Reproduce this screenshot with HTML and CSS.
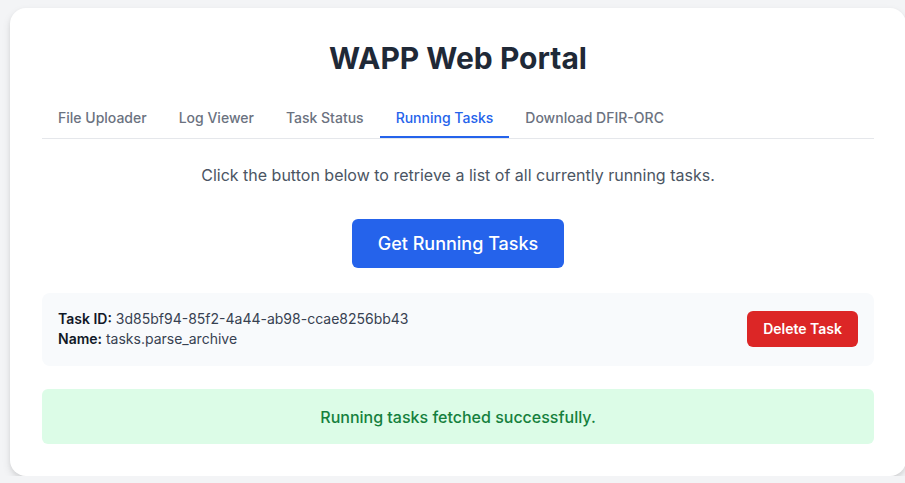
FILE: index.html
```html
<!DOCTYPE html>
<html lang="en">
<head>
<meta charset="utf-8">
<title>WAPP Web Portal</title>
<link rel="stylesheet" href="styles.css">
</head>
<body>
<main class="card">
  <h1 class="title">WAPP Web Portal</h1>
  <nav class="tabs">
    <button class="tab">File Uploader</button>
    <button class="tab">Log Viewer</button>
    <button class="tab">Task Status</button>
    <button class="tab active">Running Tasks</button>
    <button class="tab">Download DFIR-ORC</button>
  </nav>
  <section class="panel">
    <p class="desc">Click the button below to retrieve a list of all currently running tasks.</p>
    <div class="action">
      <button class="primary">Get Running Tasks</button>
    </div>
    <div class="task">
      <div class="task-info">
        <div><strong>Task ID:</strong> 3d85bf94-85f2-4a44-ab98-ccae8256bb43</div>
        <div><strong>Name:</strong> tasks.parse_archive</div>
      </div>
      <button class="danger">Delete Task</button>
    </div>
    <div class="success">Running tasks fetched successfully.</div>
  </section>
</main>
</body>
</html>
```
FILE: styles.css
```css
* { box-sizing: border-box; }
html, body { margin: 0; }
body {
  background: #f3f4f6;
  font-family: Inter, "Noto Sans", sans-serif;
  color: #1f2937;
  padding: 8px 0 0 10px;
}
.card {
  width: 896px;
  background: #ffffff;
  border-radius: 16px;
  box-shadow: 0 4px 8px rgba(0,0,0,0.10), 0 2px 4px rgba(0,0,0,0.06);
  padding: 32px;
}
.title {
  margin: 0 0 24px;
  text-align: center;
  font-size: 30px;
  line-height: 36px;
  font-weight: 700;
  color: #1f2937;
}
.tabs {
  display: flex;
  border-bottom: 1px solid #e5e7eb;
}
.tab {
  font-family: inherit;
  font-size: 14px;
  line-height: 20px;
  font-weight: 500;
  color: #6b7280;
  background: none;
  border: none;
  border-bottom: 2px solid transparent;
  padding: 8px 16px;
  cursor: pointer;
}
.tab.active {
  color: #2563eb;
  border-bottom-color: #2563eb;
}
.panel { padding-top: 24px; }
.desc {
  margin: 0;
  text-align: center;
  font-size: 16px;
  line-height: 24px;
  color: #4b5563;
}
.action {
  display: flex;
  justify-content: center;
  margin-top: 32px;
}
.primary {
  font-family: inherit;
  font-size: 18px;
  line-height: 28px;
  font-weight: 500;
  color: #ffffff;
  background: #2563eb;
  border: none;
  border-radius: 6px;
  padding: 11px 26px 10px;
}
.task {
  margin-top: 25px;
  background: #f8fafc;
  border-radius: 8px;
  padding: 16px 16px 17px 16px;
  display: flex;
  justify-content: space-between;
  align-items: center;
  font-size: 14px;
  line-height: 20px;
  color: #374151;
}
.task strong { color: #111827; font-weight: 600; }
.danger {
  font-family: inherit;
  font-size: 14px;
  line-height: 20px;
  font-weight: 600;
  color: #ffffff;
  background: #dc2626;
  border: none;
  border-radius: 6px;
  padding: 8px 16px;
}
.success {
  margin-top: 23px;
  background: #dcfce7;
  color: #15803d;
  border-radius: 6px;
  padding: 16px 16px 15px;
  text-align: center;
  font-size: 16px;
  line-height: 24px;
  font-weight: 500;
}
```
